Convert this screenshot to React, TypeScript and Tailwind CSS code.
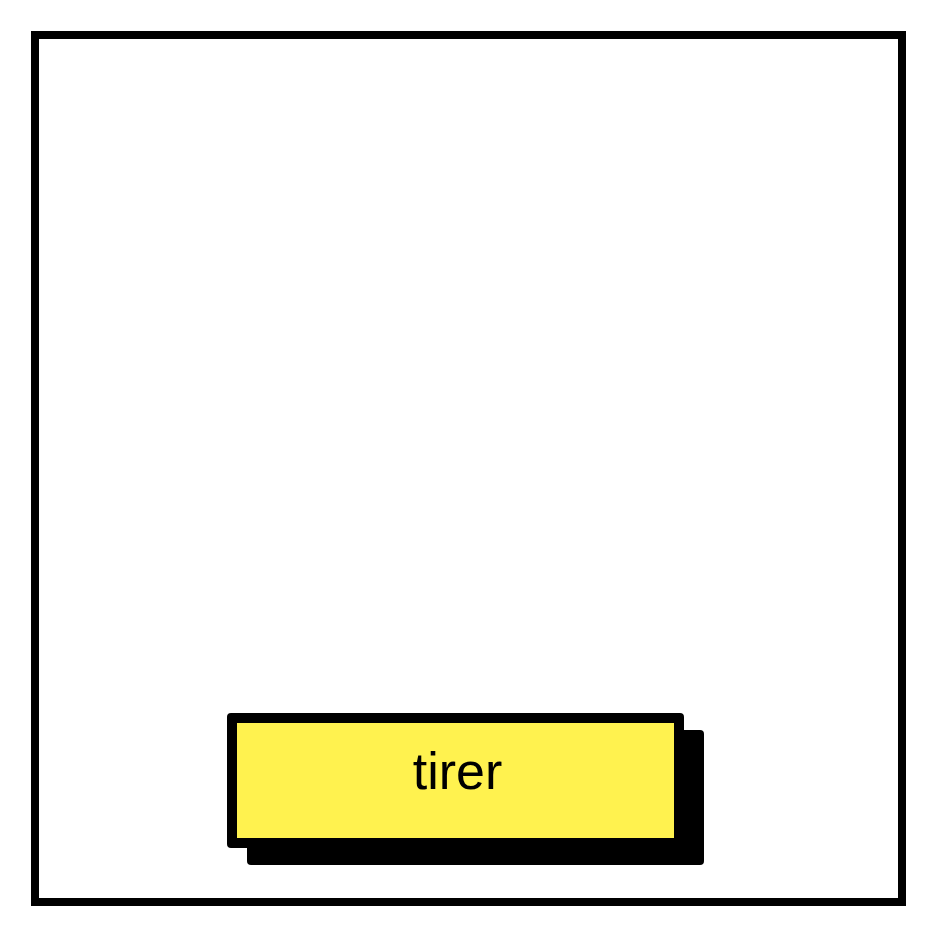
export default function App() {
  return (
    <div className="w-[937px] h-[937px] bg-white p-[31px]" style={{ fontFamily: '"Liberation Sans", Arial, sans-serif' }}>
      <div className="w-[875px] h-[875px] border-8 border-black flex flex-col items-center justify-end pb-[50px]">
        <div className="w-[457px] h-[135px] mr-[26px] border-[10px] border-black rounded-[4px] bg-[#fff24f] shadow-[20px_17px_0_0_#000] flex items-center justify-center pb-[20px] pl-[4px]">
          <span className="text-[52px] leading-none text-black">tirer</span>
        </div>
      </div>
    </div>
  );
}
